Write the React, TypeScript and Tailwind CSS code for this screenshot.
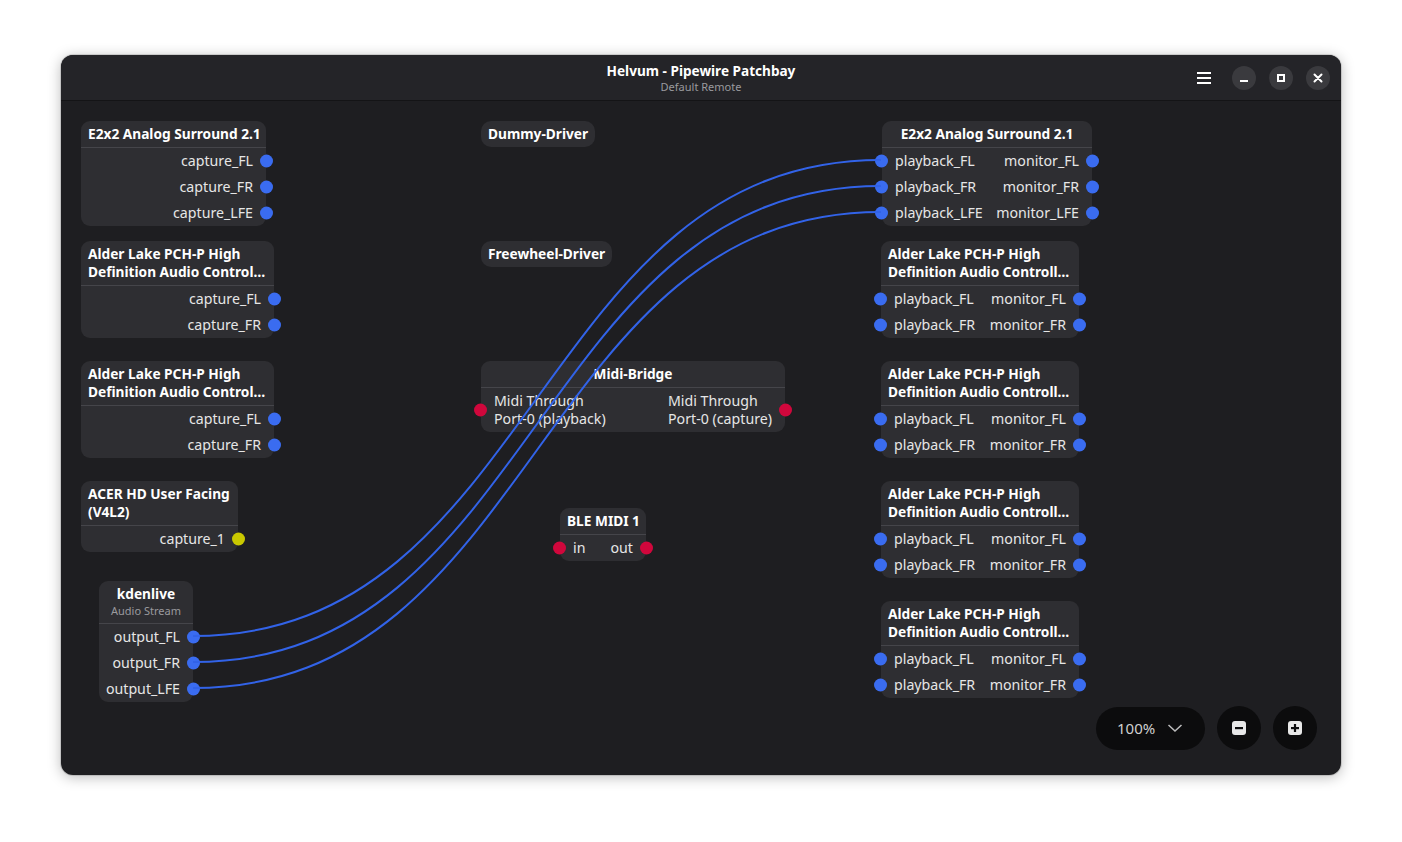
import React from 'react';

type Port = { label: string; color: 'blue' | 'red' | 'yellow' };

type Row = { input?: Port; output?: Port };

interface NodeProps {
  pos: string;
  width: string;
  title: string[];
  titleAlign?: 'left' | 'center';
  subtitle?: string;
  rows: Row[];
  tall?: boolean;
}

const dotColor: Record<Port['color'], string> = {
  blue: 'bg-[#3a6cf0]',
  red: 'bg-[#d0073c]',
  yellow: 'bg-[#c9c800]',
};

const Dot: React.FC<{ color: Port['color']; side: 'left' | 'right' }> = ({ color, side }) => (
  <span
    className={`absolute top-1/2 -translate-y-1/2 w-[13px] h-[13px] rounded-full ${dotColor[color]} ${
      side === 'left' ? 'left-[-7px]' : 'right-[-7px]'
    }`}
  />
);

const Node: React.FC<NodeProps> = ({ pos, width, title, titleAlign = 'left', subtitle, rows, tall }) => (
  <div className={`absolute ${pos} ${width} bg-[#2e2e32] rounded-[9px]`}>
    <div
      className={`px-[7px] py-[4px] border-b border-[#45454a] ${titleAlign === 'center' ? 'text-center' : 'text-left'}`}
    >
      {title.map((t) => (
        <div key={t} className="text-[13.7px] leading-[18px] font-bold text-white whitespace-nowrap">
          {t}
        </div>
      ))}
      {subtitle && <div className="text-[11px] leading-[16px] text-[#9a9a9e]">{subtitle}</div>}
    </div>
    {rows.map((r, i) => (
      <div
        key={i}
        className={`relative flex items-center text-[14.2px] text-[#e6e6e6] whitespace-pre ${
          r.input ? 'justify-between px-[13px]' : 'justify-end pl-[5px] pr-[13px]'
        } ${tall ? 'h-[44px] leading-[18px]' : 'h-[26px] leading-[18px]'}`}
      >
        {r.input && <span>{r.input.label}</span>}
        {r.output && <span className="text-left">{r.output.label}</span>}
        {r.input && <Dot color={r.input.color} side="left" />}
        {r.output && <Dot color={r.output.color} side="right" />}
      </div>
    ))}
  </div>
);

const Pill: React.FC<{ pos: string; label: string }> = ({ pos, label }) => (
  <div
    className={`absolute ${pos} h-[26px] px-[7px] flex items-center rounded-[10px] bg-[#2e2e32] text-[13.7px] font-bold text-white`}
  >
    {label}
  </div>
);

const out = (label: string, color: Port['color'] = 'blue'): Row => ({ output: { label, color } });
const io = (a: string, b: string, color: Port['color'] = 'blue'): Row => ({
  input: { label: a, color },
  output: { label: b, color },
});

const alderRight = ['Alder Lake PCH-P High', 'Definition Audio Controll…'];
const alderLeft = ['Alder Lake PCH-P High', 'Definition Audio Control…'];

function link(x1: number, y1: number, x2: number, y2: number) {
  const d = (x2 - x1) / 2;
  return `M ${x1} ${y1} C ${x1 + d} ${y1}, ${x2 - d} ${y2}, ${x2} ${y2}`;
}

const App: React.FC = () => {
  return (
    <div
      className="w-[1402px] h-[842px] bg-white pt-[55px] pl-[61px]"
      style={{ fontFamily: '"Noto Sans", "Open Sans", sans-serif' }}
    >
      <div className="w-[1280px] h-[720px] rounded-[12px] overflow-hidden flex flex-col bg-[#1e1e21] shadow-[0_2px_14px_rgba(0,0,0,0.28),0_0_0_1px_rgba(0,0,0,0.12)]">
        {/* Header bar */}
        <div className="h-[46px] shrink-0 bg-[#242428] border-b border-[#141416] flex items-center relative">
          <div className="flex-1 flex flex-col items-center justify-center leading-none">
            <div className="text-[13.6px] font-bold text-white leading-[18px]">Helvum - Pipewire Patchbay</div>
            <div className="text-[11px] text-[#9a9a9e] leading-[14px]">Default Remote</div>
          </div>
          <div className="absolute right-[11px] top-0 h-full flex items-center gap-[13px]">
            <div className="w-[24px] h-[24px] flex flex-col items-center justify-center gap-[3px] mr-[3px]">
              <span className="block w-[14px] h-[2px] bg-white" />
              <span className="block w-[14px] h-[2px] bg-white" />
              <span className="block w-[14px] h-[2px] bg-white" />
            </div>
            <div className="w-[24px] h-[24px] rounded-full bg-[#3a3a3e] flex items-center justify-center">
              <span className="block w-[8px] h-[2px] bg-white mt-[6px]" />
            </div>
            <div className="w-[24px] h-[24px] rounded-full bg-[#3a3a3e] flex items-center justify-center">
              <span className="block w-[8px] h-[8px] border-2 border-white" />
            </div>
            <div className="w-[24px] h-[24px] rounded-full bg-[#3a3a3e] flex items-center justify-center">
              <svg width="10" height="10" viewBox="0 0 10 10">
                <path d="M1.5 1.5 L8.5 8.5 M8.5 1.5 L1.5 8.5" stroke="white" strokeWidth="2" strokeLinecap="round" />
              </svg>
            </div>
          </div>
        </div>

        {/* Canvas */}
        <div className="relative flex-1">
          <Node
            pos="left-[20px] top-[20px]"
            width="w-[185px]"
            title={['E2x2 Analog Surround 2.1']}
            rows={[out('capture_FL'), out('capture_FR'), out('capture_LFE')]}
          />
          <Node
            pos="left-[20px] top-[140px]"
            width="w-[193px]"
            title={alderLeft}
            rows={[out('capture_FL'), out('capture_FR')]}
          />
          <Node
            pos="left-[20px] top-[260px]"
            width="w-[193px]"
            title={alderLeft}
            rows={[out('capture_FL'), out('capture_FR')]}
          />
          <Node
            pos="left-[20px] top-[380px]"
            width="w-[157px]"
            title={['ACER HD User Facing', '(V4L2)']}
            rows={[out('capture_1', 'yellow')]}
          />
          <Node
            pos="left-[38px] top-[480px]"
            width="w-[94px]"
            title={['kdenlive']}
            titleAlign="center"
            subtitle="Audio Stream"
            rows={[out('output_FL'), out('output_FR'), out('output_LFE')]}
          />

          <Pill pos="left-[420px] top-[20px]" label="Dummy-Driver" />
          <Pill pos="left-[420px] top-[140px]" label="Freewheel-Driver" />

          <Node
            pos="left-[420px] top-[260px]"
            width="w-[304px]"
            title={['Midi-Bridge']}
            titleAlign="center"
            tall
            rows={[io('Midi Through\nPort-0 (playback)', 'Midi Through\nPort-0 (capture)', 'red')]}
          />
          <Node
            pos="left-[499px] top-[407px]"
            width="w-[86px]"
            title={['BLE MIDI 1']}
            titleAlign="center"
            rows={[io('in', 'out', 'red')]}
          />

          <Node
            pos="left-[821px] top-[20px]"
            width="w-[210px]"
            title={['E2x2 Analog Surround 2.1']}
            titleAlign="center"
            rows={[
              io('playback_FL', 'monitor_FL'),
              io('playback_FR', 'monitor_FR'),
              io('playback_LFE', 'monitor_LFE'),
            ]}
          />
          {['top-[140px]', 'top-[260px]', 'top-[380px]', 'top-[500px]'].map((t) => (
            <Node
              key={t}
              pos={`left-[820px] ${t}`}
              width="w-[198px]"
              title={alderRight}
              rows={[io('playback_FL', 'monitor_FL'), io('playback_FR', 'monitor_FR')]}
            />
          ))}

          {/* Links */}
          <svg className="absolute inset-0 pointer-events-none" width="1280" height="674">
            {[0, 1, 2].map((i) => (
              <path
                key={i}
                d={link(132, 535 + i * 26, 820, 59 + i * 26)}
                fill="none"
                stroke="#3263e8"
                strokeWidth="2"
              />
            ))}
          </svg>

          {/* Zoom controls */}
          <div className="absolute right-[24px] bottom-[25px] flex items-center gap-[12px]">
            <div className="h-[43px] w-[109px] rounded-full bg-[#0c0c0d] flex items-center pl-[21px] gap-[12px] text-[15px] text-[#d0d0d0]">
              <span>100%</span>
              <svg width="16" height="16" viewBox="0 0 16 16">
                <path d="M1.5 5 L8 11 L14.5 5" fill="none" stroke="#bdbdbd" strokeWidth="1.5" />
              </svg>
            </div>
            <div className="w-[44px] h-[44px] rounded-full bg-[#0c0c0d] flex items-center justify-center">
              <svg width="14" height="14" viewBox="0 0 14 14">
                <rect x="0" y="0" width="14" height="14" rx="3" fill="#e8e8e8" />
                <rect x="3" y="6" width="8" height="2.2" fill="#0c0c0d" />
              </svg>
            </div>
            <div className="w-[44px] h-[44px] rounded-full bg-[#0c0c0d] flex items-center justify-center">
              <svg width="14" height="14" viewBox="0 0 14 14">
                <rect x="0" y="0" width="14" height="14" rx="3" fill="#e8e8e8" />
                <rect x="3" y="6" width="8" height="2.2" fill="#0c0c0d" />
                <rect x="5.9" y="3" width="2.2" height="8" fill="#0c0c0d" />
              </svg>
            </div>
          </div>
        </div>
      </div>
    </div>
  );
};

export default App;
